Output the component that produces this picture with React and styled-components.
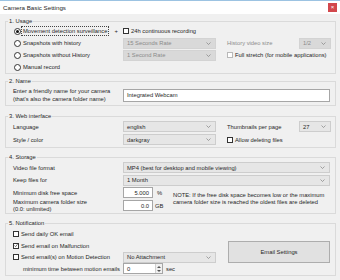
import React from "react";
import styled, { createGlobalStyle } from "styled-components";

const GlobalStyle = createGlobalStyle`
  html, body { margin: 0; padding: 0; background: #f0f0f0; }
  body {
    font-family: "Liberation Sans", Arial, sans-serif;
    font-size: 5.8px;
    color: #262626;
  }
  * { box-sizing: border-box; }
`;

const Window = styled.div`
  width: 340px;
  height: 280px;
  overflow: hidden;
  background: #f0f0f0;
  display: flex;
  flex-direction: column;
`;

const TitleBar = styled.div`
  height: 14px;
  flex: none;
  background: #fff;
  border-top: 1px solid #9cc3e2;
  display: flex;
  align-items: center;
  justify-content: space-between;
  padding: 0 3px 0 3px;
  font-size: 6.2px;
`;

const CloseBtn = styled.div`
  width: 9px;
  height: 9px;
  background: #d2474c;
  color: #fff;
  font-size: 6px;
  line-height: 9px;
  text-align: center;
`;

const Content = styled.div`
  padding: 3px 4px 0 5px;
  display: flex;
  flex-direction: column;
`;

const Group = styled.fieldset`
  margin: ${(p) => p.$top || 0}px 0 0 0;
  padding: ${(p) => p.$pt || 0}px 5px ${(p) => p.$pb || 0}px 7px;
  border: 1px solid #dadada;
  min-width: 0;
`;

const Legend = styled.legend`
  margin-left: -5px;
  padding: 0 1px;
  line-height: 8px;
`;

const Grid = styled.div`
  display: grid;
  grid-template-columns: ${(p) => p.$cols || "110px 93px 11px 72px 32px"};
  grid-auto-rows: ${(p) => p.$row || 11}px;
  row-gap: ${(p) => p.$gap || 0}px;
  align-items: center;
`;

const Cell = styled.div`
  grid-column: ${(p) => p.$col || "auto"};
  grid-row: ${(p) => p.$rowSpan || "auto"};
  display: flex;
  align-items: center;
  white-space: nowrap;
  min-width: 0;
  padding-left: ${(p) => p.$indent || 0}px;
  color: ${(p) => (p.$dim ? "#8c8c8c" : "inherit")};
  height: 100%;
`;

const TwoLine = styled.div`
  line-height: ${(p) => p.$lh || 8}px;
  white-space: nowrap;
`;

const RadioDot = styled.span`
  width: 7px;
  height: 7px;
  border-radius: 50%;
  border: 1px solid #333;
  background: #fff;
  margin: 0 1px 0 1px;
  flex: none;
  display: flex;
  align-items: center;
  justify-content: center;
  &::after {
    content: "";
    width: 3px;
    height: 3px;
    border-radius: 50%;
    background: ${(p) => (p.$on ? "#111" : "transparent")};
  }
`;

const FocusLabel = styled.span`
  outline: ${(p) => (p.$focus ? "1px dotted #444" : "none")};
  padding: 0 1px;
  line-height: 8px;
`;

const Box = styled.span`
  width: 6px;
  height: 6px;
  border: 1px solid ${(p) => (p.$dim ? "#b8b8b8" : "#333")};
  background: #fff;
  margin-right: 2px;
  flex: none;
  display: flex;
  align-items: center;
  justify-content: center;
`;

const Plus = styled.span`
  margin-left: auto;
  margin-right: 5px;
`;

const Select = styled.div`
  width: 100%;
  height: 11px;
  display: flex;
  align-items: center;
  justify-content: space-between;
  padding: 0 4px 0 3px;
  background: ${(p) => (p.$off ? "#d9d9d9" : "#e6e6e6")};
  border: 1px solid ${(p) => (p.$off ? "#d3d3d3" : "#cdcdcd")};
  color: ${(p) => (p.$off ? "#8a8a8a" : "#262626")};
  white-space: nowrap;
`;

const Input = styled.div`
  width: 100%;
  height: ${(p) => p.$h || 11}px;
  display: flex;
  align-items: center;
  justify-content: ${(p) => (p.$right ? "flex-end" : "flex-start")};
  padding: 0 3px;
  background: #fff;
  border: 1px solid #a6a6a6;
  white-space: nowrap;
`;

const Unit = styled.span`
  margin-left: ${(p) => p.$ml || 4}px;
`;

const Note = styled.div`
  line-height: 7px;
  white-space: nowrap;
  padding-left: 1px;
`;

const Spinner = styled.div`
  width: 40px;
  height: 11px;
  display: flex;
  background: #fff;
  border: 1px solid #a6a6a6;
`;

const SpinText = styled.div`
  flex: 1;
  padding-left: 3px;
  display: flex;
  align-items: center;
`;

const SpinArrows = styled.div`
  width: 7px;
  border-left: 1px solid #d0d0d0;
  background: #f0f0f0;
  display: flex;
  flex-direction: column;
  align-items: center;
  justify-content: space-around;
`;

const Button = styled.div`
  height: 22px;
  width: 102px;
  margin-left: 1px;
  background: #e1e1e1;
  border: 1px solid #adadad;
  display: flex;
  align-items: center;
  justify-content: center;
`;

const Chevron = () => (
  <svg width="5" height="3" viewBox="0 0 5 3">
    <polyline points="0.5,0.5 2.5,2.5 4.5,0.5" fill="none" stroke="#808080" strokeWidth="0.7" />
  </svg>
);

const Tick = () => (
  <svg width="5" height="5" viewBox="0 0 5 5">
    <polyline points="0.6,2.6 2,4 4.4,0.8" fill="none" stroke="#222" strokeWidth="0.8" />
  </svg>
);

const Tri = ({ up }) => (
  <svg width="4" height="2" viewBox="0 0 4 2">
    <polygon points={up ? "0,2 2,0 4,2" : "0,0 4,0 2,2"} fill="#555" />
  </svg>
);

const Radio = ({ on, focus, children }) => (
  <>
    <RadioDot $on={on} />
    <FocusLabel $focus={focus}>{children}</FocusLabel>
  </>
);

const Check = ({ on, dim, children }) => (
  <>
    <Box $dim={dim}>{on && <Tick />}</Box>
    <span>{children}</span>
  </>
);

export default function App() {
  return (
    <Window>
      <GlobalStyle />
      <TitleBar>
        <span>Camera Basic Settings</span>
        <CloseBtn>×</CloseBtn>
      </TitleBar>
      <Content>
        <Group>
          <Legend>1. Usage</Legend>
          <Grid $row={12}>
            <Cell $col="1">
              <Radio on focus>Movement detection surveillance</Radio>
              <Plus>+</Plus>
            </Cell>
            <Cell $col="2 / 6">
              <Check>24h continuous recording</Check>
            </Cell>

            <Cell $col="1">
              <Radio>Snapshots with history</Radio>
            </Cell>
            <Cell $col="2">
              <Select $off>
                15 Seconds Rate <Chevron />
              </Select>
            </Cell>
            <Cell $col="4" $dim>
              History video size
            </Cell>
            <Cell $col="5">
              <Select $off>
                1/2 <Chevron />
              </Select>
            </Cell>

            <Cell $col="1">
              <Radio>Snapshots without History</Radio>
            </Cell>
            <Cell $col="2">
              <Select $off>
                1 Second Rate <Chevron />
              </Select>
            </Cell>
            <Cell $col="4 / 6">
              <Check dim>Full stretch (for mobile applications)</Check>
            </Cell>

            <Cell $col="1">
              <Radio>Manual record</Radio>
            </Cell>
          </Grid>
        </Group>

        <Group $top={3} $pt={2} $pb={2}>
          <Legend>2. Name</Legend>
          <Grid $cols="110px 1fr" $row={16}>
            <Cell>
              <TwoLine>
                Enter a friendly name for your camera
                <br />
                (that's also the camera folder name)
              </TwoLine>
            </Cell>
            <Cell>
              <Input $h={13}>Integrated Webcam</Input>
            </Cell>
          </Grid>
        </Group>

        <Group $top={6} $pt={1} $pb={2}>
          <Legend>3. Web interface</Legend>
          <Grid $gap={2}>
            <Cell $col="1">Language</Cell>
            <Cell $col="2">
              <Select>
                english <Chevron />
              </Select>
            </Cell>
            <Cell $col="4">Thumbnails per page</Cell>
            <Cell $col="5">
              <Select>
                27 <Chevron />
              </Select>
            </Cell>

            <Cell $col="1">Style / color</Cell>
            <Cell $col="2">
              <Select>
                darkgray <Chevron />
              </Select>
            </Cell>
            <Cell $col="4 / 6">
              <Check>Allow deleting files</Check>
            </Cell>
          </Grid>
        </Group>

        <Group $top={5} $pt={1} $pb={2}>
          <Legend>4. Storage</Legend>
          <Grid $cols="110px 30px 19px 1fr" $gap={1.7}>
            <Cell $col="1">Video file format</Cell>
            <Cell $col="2 / 5">
              <Select>
                MP4 (best for desktop and mobile viewing) <Chevron />
              </Select>
            </Cell>

            <Cell $col="1">Keep files for</Cell>
            <Cell $col="2 / 5">
              <Select>
                1 Month <Chevron />
              </Select>
            </Cell>

            <Cell $col="1">Minimum disk free space</Cell>
            <Cell $col="2">
              <Input $right>5.000</Input>
            </Cell>
            <Cell $col="3">
              <Unit $ml={4}>%</Unit>
            </Cell>
            <Cell $col="4" $rowSpan="3 / 5">
              <Note>
                NOTE: If the free disk space becomes low or the maximum
                <br />
                camera folder size is reached the oldest files are deleted
              </Note>
            </Cell>

            <Cell $col="1">
              <TwoLine $lh={7}>
                Maximum camera folder size
                <br />
                (0.0: unlimited)
              </TwoLine>
            </Cell>
            <Cell $col="2">
              <Input $right>0.0</Input>
            </Cell>
            <Cell $col="3">
              <Unit $ml={2}>GB</Unit>
            </Cell>
          </Grid>
        </Group>

        <Group $top={5} $pt={1.5} $pb={0.5}>
          <Legend>5. Notification</Legend>
          <Grid $row={11.5}>
            <Cell $col="1 / 3">
              <Check>Send daily OK email</Check>
            </Cell>

            <Cell $col="1 / 3">
              <Check on>Send email on Malfunction</Check>
            </Cell>
            <Cell $col="4 / 6" $rowSpan="2 / 4">
              <Button>Email Settings</Button>
            </Cell>

            <Cell $col="1">
              <Check>Send email(s) on Motion Detection</Check>
            </Cell>
            <Cell $col="2">
              <Select>
                No Attachment <Chevron />
              </Select>
            </Cell>

            <Cell $col="1" $indent={10}>
              minimum time between motion emails
            </Cell>
            <Cell $col="2 / 4">
              <Spinner>
                <SpinText>0</SpinText>
                <SpinArrows>
                  <Tri up />
                  <Tri />
                </SpinArrows>
              </Spinner>
              <Unit $ml={3}>sec</Unit>
            </Cell>
          </Grid>
        </Group>
      </Content>
    </Window>
  );
}
